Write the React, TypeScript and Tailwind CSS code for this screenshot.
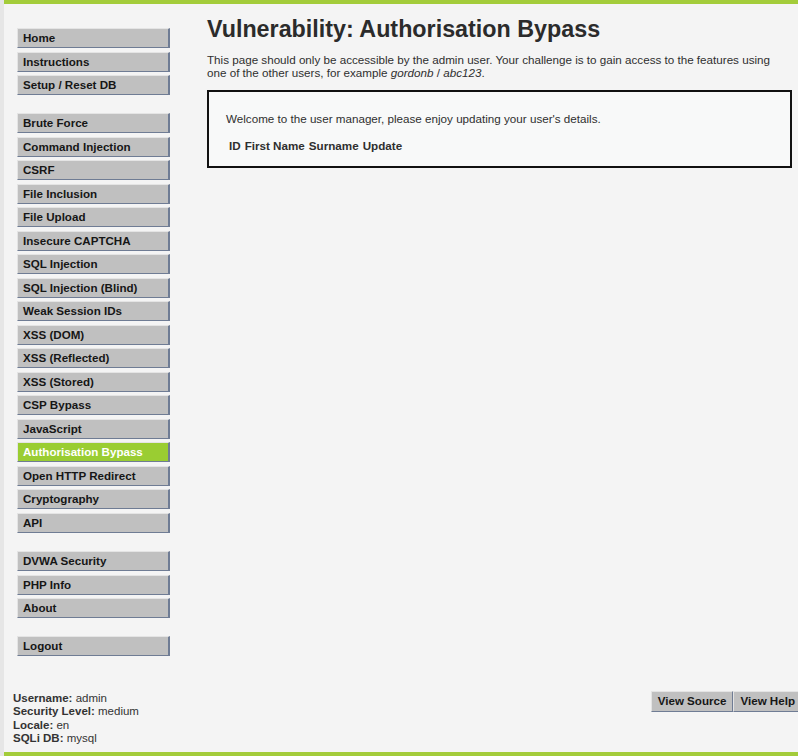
import React from "react";

const groups: string[][] = [
  ["Home", "Instructions", "Setup / Reset DB"],
  [
    "Brute Force",
    "Command Injection",
    "CSRF",
    "File Inclusion",
    "File Upload",
    "Insecure CAPTCHA",
    "SQL Injection",
    "SQL Injection (Blind)",
    "Weak Session IDs",
    "XSS (DOM)",
    "XSS (Reflected)",
    "XSS (Stored)",
    "CSP Bypass",
    "JavaScript",
    "Authorisation Bypass",
    "Open HTTP Redirect",
    "Cryptography",
    "API",
  ],
  ["DVWA Security", "PHP Info", "About"],
  ["Logout"],
];

const ACTIVE = "Authorisation Bypass";

function MenuItem({ label }: { label: string }) {
  const active = label === ACTIVE;
  return (
    <li className="mb-[3.5px]">
      <a
        className={
          "block h-[20px] leading-[18px] pl-[5px] text-[11.6px] font-bold border-t border-l border-t-[#e4e4e4] border-l-[#e4e4e4] border-r-2 border-b border-r-[#6f7c94] border-b-[#6f7c94] " +
          (active ? "bg-[#9acd32] text-white" : "bg-[#c0c0c0] text-[#161616]")
        }
      >
        {label}
      </a>
    </li>
  );
}

const btn =
  "h-[21px] border-t border-l border-[#e4e4e4] border-r border-r-[#6f7c94] border-b border-b-[#6f7c94] bg-[#c0c0c0] px-[6px] text-[11.6px] font-bold text-[#161616]";

export default function App() {
  return (
    <div className="flex min-h-screen overflow-hidden bg-[#f4f4f4] text-[#2f2f2f] font-['Liberation_Sans',Arial,sans-serif]">
      <div className="w-[4px] shrink-0 bg-[#e6e6e6]" />
      <div className="flex flex-1 flex-col">
        <div className="h-[4px] bg-[#a3cc3a]" />

        <div className="flex">
          {/* side menu */}
          <nav className="ml-[13px] mt-[24px] w-[153px] shrink-0">
            {groups.map((g, i) => (
              <ul key={i} className="mb-[18.3px]">
                {g.map((l) => (
                  <MenuItem key={l} label={l} />
                ))}
              </ul>
            ))}
          </nav>

          {/* main body */}
          <div className="ml-[37px] mr-[6px] flex-1">
            <h1 className="mt-[10px] text-[23.3px] leading-[30px] font-bold text-[#2b2b2b]">
              Vulnerability: Authorisation Bypass
            </h1>
            <p className="mt-[9px] text-[11.65px] leading-[13px] text-[#2f2f2f]">
              This page should only be accessible by the admin user. Your challenge is to gain access to the features using
              <br />
              one of the other users, for example <i>gordonb</i> / <i>abc123</i>.
            </p>
            <div className="mt-[11px] border-2 border-[#111] bg-[#f8f9f9] px-[17px] pt-[20px] pb-[11px]">
              <p className="text-[11.65px] leading-[13px]">
                Welcome to the user manager, please enjoy updating your user's details.
              </p>
              <table className="mt-[11px] text-[11.65px] font-bold">
                <thead>
                  <tr>
                    <th className="px-[2px] py-[1px] font-bold first:pl-[3px]">ID</th>
                    <th className="px-[2px] py-[1px] font-bold">First Name</th>
                    <th className="px-[2px] py-[1px] font-bold">Surname</th>
                    <th className="px-[2px] py-[1px] font-bold">Update</th>
                  </tr>
                </thead>
              </table>
            </div>
          </div>
        </div>

        {/* footer info */}
        <div className="mt-[16px] flex items-start justify-between">
          <div className="ml-[9px] mt-[1px] text-[11.5px] leading-[13.4px] text-[#333]">
            <div>
              <b>Username:</b> admin
            </div>
            <div>
              <b>Security Level:</b> medium
            </div>
            <div>
              <b>Locale:</b> en
            </div>
            <div>
              <b>SQLi DB:</b> mysql
            </div>
          </div>
          <div className="mr-[-4px] flex">
            <button className={btn}>View Source</button>
            <button className={btn}>View Help</button>
          </div>
        </div>

        <div className="mt-[7px] h-[12px] bg-[#a3cc3a]" />
      </div>
    </div>
  );
}
